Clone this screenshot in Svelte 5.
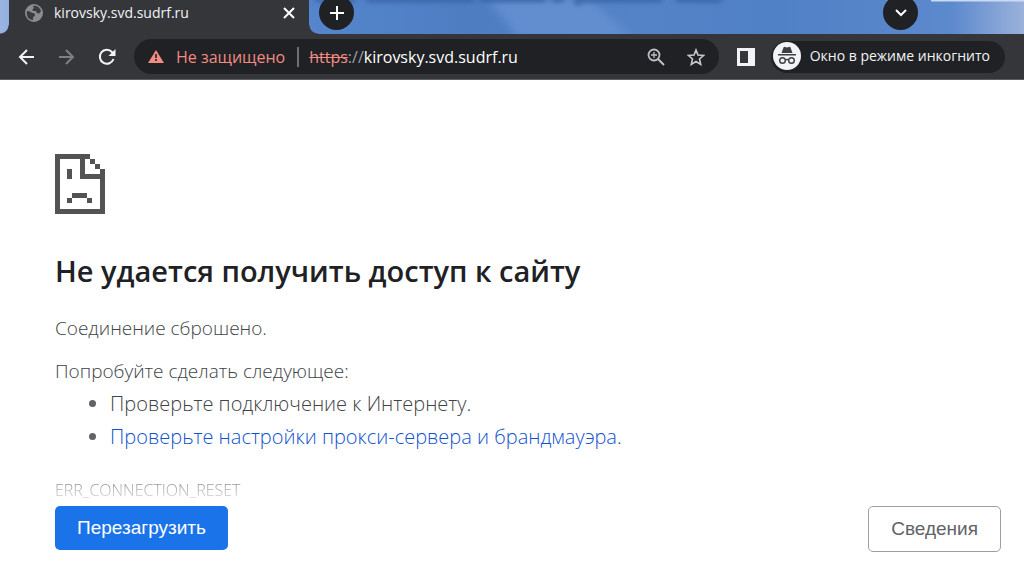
<script>
  const host = 'kirovsky.svd.sudrf.ru';
  const doc = [
    [0, 0, 7, 1], [0, 0, 1, 12], [0, 11, 10, 1], [9, 3, 1, 9],
    [5, 0, 1, 5], [5, 4, 5, 1], [7, 1, 1, 1], [8, 2, 1, 1],
    [2.4, 3, 1, 2], [3.4, 7.8, 3, 1], [2.4, 8.8, 1, 1], [6.4, 8.8, 1, 1]
  ];
</script>

<div class="window">
  <header>
    <div class="strip">
      <svg class="wallpaper" viewBox="0 0 1024 34" preserveAspectRatio="none" aria-hidden="true">
        <defs>
          <linearGradient id="sky">
            <stop offset="0" stop-color="#9ab5e2" />
            <stop offset=".02" stop-color="#86a9de" />
            <stop offset=".3" stop-color="#5585cc" />
            <stop offset=".46" stop-color="#4e7dc2" />
            <stop offset=".62" stop-color="#5583c8" />
            <stop offset=".76" stop-color="#5080c6" />
            <stop offset=".93" stop-color="#5d89cd" />
            <stop offset="1" stop-color="#9ab2dc" />
          </linearGradient>
          <filter id="soft" filterUnits="userSpaceOnUse" x="440" y="-20" width="240" height="80"><feGaussianBlur stdDeviation="4" /></filter>
          <filter id="smudge" filterUnits="userSpaceOnUse" x="300" y="-20" width="460" height="50"><feGaussianBlur stdDeviation="3 2" /></filter>
        </defs>
        <rect width="1024" height="34" fill="url(#sky)" />
        <path d="M484-5h100l50 44H520z" fill="#628ed0" filter="url(#soft)" />
        <path d="M315 0h40M366 0h108M480 0h66M552 0h12M574 0h88M676 0h46M578 0v6" fill="none" stroke="#3a66a8" stroke-width="5" filter="url(#smudge)" />
        <path d="M931 0h93" stroke="#c9daf5" stroke-width="3" />
      </svg>
      <div class="edge"></div>
      <div class="tab">
        <svg width="18" height="18" viewBox="0 0 18 18" aria-hidden="true">
          <circle cx="9" cy="9" r="9" fill="#8b8c8e" />
          <path d="M2 7c3 0 4 1 5 2 1 0 3 0 3 2s-2 1-2 3v2C4 16 1 13 2 7zM8 2c4-1 7 2 8 5-1 2-2 3-4 2-1-1 0-2-2-2-3 0-3-1-2-2s1-1 0-3z" fill="#3b3c40" />
        </svg>
        <span class="title">{host}</span>
        <button class="plain" aria-label="Закрыть вкладку">
          <svg width="12" height="12" viewBox="0 0 12 12"><path d="M1 1l10 10M11 1L1 11" stroke="#fff" stroke-width="2" /></svg>
        </button>
      </div>
      <div class="edge after"></div>
      <button class="round" aria-label="Новая вкладка">
        <svg width="16" height="16" viewBox="0 0 16 16"><path d="M8 1v14M1 8h14" stroke="#fff" stroke-width="2" /></svg>
      </button>
      <button class="round search" aria-label="Поиск вкладок">
        <svg width="12" height="12" viewBox="0 0 12 12"><path d="M1 3l5 5 5-5" fill="none" stroke="#fff" stroke-width="2" /></svg>
      </button>
    </div>

    <div class="toolbar">
      <nav>
        <button class="plain" aria-label="Назад">
          <svg width="18" height="18" viewBox="0 0 18 18"><path d="M16 9H2M9 2L2 9l7 7" fill="none" stroke="#f1f3f4" stroke-width="2" /></svg>
        </button>
        <button class="plain" aria-label="Вперёд">
          <svg width="18" height="18" viewBox="0 0 18 18"><path d="M1 9h14M8 2l7 7-7 7" fill="none" stroke="#7f8083" stroke-width="2" /></svg>
        </button>
        <button class="plain" aria-label="Обновить">
          <svg width="18" height="18" viewBox="0 0 18 18"><path d="M15.500 11A7 7 0 1 1 14 4l2 2" fill="none" stroke="#f1f3f4" stroke-width="2" /><path d="M17.500 1v7h-7z" fill="#f1f3f4" /></svg>
        </button>
      </nav>
      <div class="omnibox">
        <button class="plain security">
          <svg width="16" height="16" viewBox="0 0 16 16" aria-hidden="true"><path d="M8 1l8 13H0z" fill="#f28b82" /><path d="M8 5v4M8 10v2" stroke="#202124" stroke-width="1.600" /></svg>
          Не защищено
        </button>
        <span class="bar"></span>
        <div class="url" role="textbox" tabindex="0" contenteditable="true" aria-label="Адрес"><s>https</s><i>://</i>{host}</div>
        <button class="plain" aria-label="Масштаб">
          <svg width="18" height="18" viewBox="0 0 18 18" fill="none" stroke="#bdc1c6"><circle cx="7" cy="7" r="5.500" stroke-width="1.800" /><path d="M11 11l6 6" stroke-width="2" /><path d="M7 4v6M4 7h6" stroke-width="1.300" /></svg>
        </button>
        <button class="plain" aria-label="Добавить в закладки">
          <svg width="18" height="18" viewBox="0 0 18 18"><path d="M9 2l2 5 5.500.500-4 3.500 1.200 5.400L9 13.500l-4.700 2.900L5.500 11l-4-3.500L7 7z" fill="none" stroke="#c6c9cc" stroke-width="1.600" /></svg>
        </button>
      </div>
      <button class="plain" aria-label="Боковая панель">
        <svg width="18" height="18" viewBox="0 0 18 18"><path d="M0 0h18v18H0zM3 3v12h8V3z" fill="#f1f3f4" fill-rule="evenodd" /></svg>
      </button>
      <button class="incognito">
        <svg width="28" height="28" viewBox="0 0 28 28" aria-hidden="true">
          <circle cx="14" cy="14" r="14" fill="#f1f3f4" />
          <path d="M8.500 11l2-5.500q.4-1 1.500-.6l2 .6 2-.6q1.100-.4 1.500.6l2 5.500zM5 12h18v1.400H5z" fill="#3c4043" />
          <g fill="none" stroke="#3c4043" stroke-width="1.400"><circle cx="9.500" cy="18.500" r="2.800" /><circle cx="18.500" cy="18.500" r="2.800" /><path d="M12.300 18q1.700-1 3.400 0" /></g>
        </svg>
        Окно в режиме инкогнито
      </button>
    </div>
  </header>

  <main>
    <svg class="sad" viewBox="0 0 10 12" shape-rendering="crispEdges" aria-hidden="true">
      {#each doc as [x, y, width, height]}
        <rect {x} {y} {width} {height} fill="#535353" />
      {/each}
    </svg>
    <h1>Не удается получить доступ к сайту</h1>
    <p>Соединение сброшено.</p>
    <p class="try">Попробуйте сделать следующее:</p>
    <ul>
      <li>Проверьте подключение к Интернету.</li>
      <li><a href="#proxy">Проверьте настройки прокси-сервера и брандмауэра</a>.</li>
    </ul>
    <div class="code">ERR_CONNECTION_RESET</div>
    <div class="actions">
      <button class="reload">Перезагрузить</button>
      <button class="details">Сведения</button>
    </div>
  </main>
</div>

<style>
  :global(body) { background: #fff; }
  .window { font-family: "Open Sans", "Noto Sans", sans-serif; color: #404347; }
  button { font: inherit; cursor: pointer; }
  svg { display: block; flex: none; }
  header { background: #35363a; border-bottom: 1px solid #5b5c60; }
  .strip { position: relative; display: flex; height: 34px; overflow: hidden; }
  .wallpaper { position: absolute; width: 100%; height: 100%; }
  .edge { position: relative; width: 9px; background: radial-gradient(circle at 0 0, transparent 8px, #35363a 9px) 0 100% / 9px 9px no-repeat; }
  .after { background-image: radial-gradient(circle at 100% 0, transparent 8px, #35363a 9px); }
  .tab { position: relative; display: flex; gap: 11px; width: 300px; padding: 0 14px 8px 16px; box-sizing: border-box; align-items: center; background: #35363a; color: #f1f3f4; font-size: 14px; line-height: 24px; }
  .title { flex: 1; white-space: nowrap; }
  .plain { display: flex; align-items: center; padding: 0; border: 0; background: none; color: inherit; }
  .round { position: relative; display: flex; align-items: center; justify-content: center; flex: none; width: 35px; height: 35px; margin: -5px 0 0 1px; padding: 0; border: 0; border-radius: 50%; background: #202124; }
  .search { margin-left: auto; margin-right: 106px; }
  .toolbar { display: flex; align-items: center; height: 45px; padding: 0 19px 0 18px; }
  nav { display: flex; gap: 22px; margin-right: 18px; }
  .omnibox { display: flex; align-items: center; flex: 1; height: 35px; margin-right: 18px; padding: 0 14px; border-radius: 18px; background: #202124; gap: 22px; font-size: 16px; line-height: 24px; white-space: nowrap; box-sizing: border-box; }
  .security { gap: 12px; color: #f28b82; }
  .bar { width: 2px; height: 20px; margin: 0 -12px 0 -10px; background: #6d6f73; }
  .url { flex: 1; color: #fff; outline: 0; }
  s { color: #f28b82; }
  i { color: #9aa0a6; font-style: normal; }
  .incognito { display: flex; align-items: center; gap: 9px; height: 32px; margin-left: 16px; padding: 0 15px 2px 2px; border: 0; border-radius: 16px; background: #202124; color: #f1f3f4; font-size: 14px; line-height: 24px; white-space: nowrap; }
  main { padding: 74px 23px 12px 55px; font-size: 19px; line-height: 33px; font-weight: 300; }
  .sad { width: 50px; height: 60px; }
  h1 { margin: 37px 0 0; color: #202124; font-size: 29px; line-height: 40px; font-weight: 600; }
  p { margin: 21px 0 0; }
  .try { margin-top: 10px; }
  ul { margin: -1px 0 0; padding-left: 55px; font-size: 20px; }
  li::marker { color: #5f6368; }
  a { color: #1153cc; text-decoration: none; }
  .code { margin-top: 25px; font-size: 16px; line-height: 24px; height: 28px; color: transparent; background: linear-gradient(#777, #ddd 80%); background-clip: text; }
  .actions { display: flex; justify-content: space-between; align-items: flex-start; font-family: "Liberation Sans", Arial, sans-serif; font-size: 19px; line-height: 24px; font-weight: 400; }
  .reload { padding: 10px 22px; border: 0; border-radius: 5px; background: #1a73e8; color: #fff; }
  .details { padding: 10px 22px; border: 1px solid #9aa0a6; border-radius: 5px; background: #fff; color: #5f6368; }
</style>
